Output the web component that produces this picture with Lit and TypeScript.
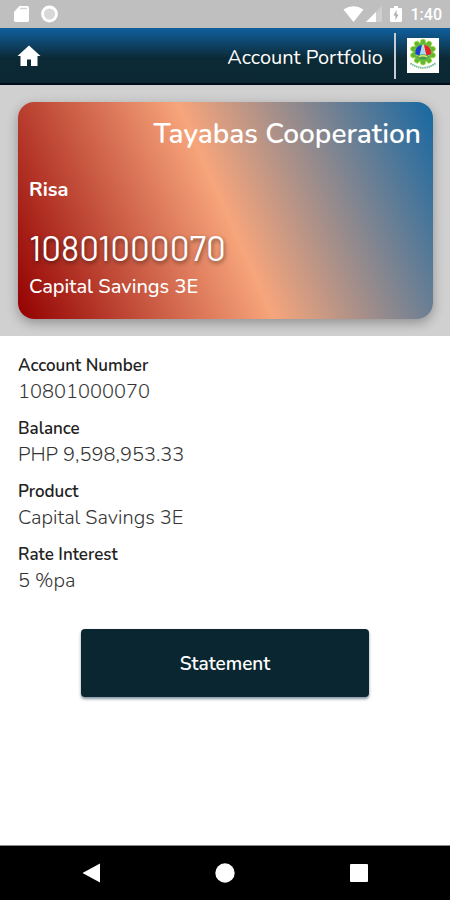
import { LitElement, html, css, svg } from "lit";
import { customElement, property } from "lit/decorators.js";

const petals = Array.from({ length: 10 }, (_, i) => i * 36);

@customElement("status-bar")
class StatusBar extends LitElement {
  static styles = css`
    :host {
      display: flex;
      align-items: center;
      height: 28px;
      padding: 0 8px 0 14px;
      background: #bfbfbf;
      color: #fff;
      font: 500 16px/28px Roboto, sans-serif;
    }
    svg { display: block; fill: #fff; }
    .left, .right { display: flex; align-items: center; }
    .left { gap: 12px; }
    .right { margin-left: auto; }
    .battery { margin: 0 9px 0 8px; }
    .time { padding-top: 2px; }
  `;
  render() {
    return html`
      <div class="left">
        <svg width="15" height="18" viewBox="0 0 15 18">
          <path d="M5.500 1H13Q15 1 15 3V15.500Q15 17 13 17H2Q0 17 0 15.500V7Z" />
          <path d="M6 3.500H13" fill="none" stroke="#d4d4d4" stroke-width="1.500" />
        </svg>
        <svg width="17" height="18" viewBox="0 0 17 18">
          <circle cx="8.500" cy="9" r="7" fill="#d8d8d8" stroke="#fff" stroke-width="2.800" />
        </svg>
      </div>
      <div class="right">
        <svg width="21" height="18" viewBox="0 0 21 18">
          <path d="M10.500 17L.500 4.500Q10.500-2 20.500 4.500Z" />
        </svg>
        <svg width="18" height="18" viewBox="0 0 18 18">
          <path d="M18 1V17H2Z" opacity=".25" />
          <path d="M12 7V17H2Z" />
        </svg>
        <svg class="battery" width="12" height="18" viewBox="0 0 12 18">
          <path d="M4 1H8V3H11Q12 3 12 4V16Q12 17 11 17H1Q0 17 0 16V4Q0 3 1 3H4Z" />
          <path d="M6.500 5L3.500 10.500H5.500V15L8.500 9.500H6.500Z" fill="#aaa" />
        </svg>
        <span class="time">1:40</span>
      </div>
    `;
  }
}

@customElement("app-header")
class AppHeader extends LitElement {
  @property() heading = "";
  static styles = css`
    :host {
      display: flex;
      align-items: center;
      box-sizing: border-box;
      height: 57px;
      padding: 0 11px 0 17px;
      border-bottom: 2px solid #020c1c;
      background: linear-gradient(#10609f, #0c2a36 55%, #0a2732);
      color: #fff;
    }
    .home { padding: 0; border: 0; background: none; cursor: pointer; }
    svg { display: block; }
    h1 {
      margin: 0 0 0 auto;
      padding: 4px 11px 0 0;
      font: 400 20px/42px Nunito, "Noto Sans", sans-serif;
      border-right: 2px solid #c3cdd6;
    }
    .logo { margin-left: 11px; background: #fff; }
  `;
  render() {
    return html`
      <button class="home" aria-label="Home">
        <svg width="24" height="22" viewBox="0 0 24 22" fill="#fff">
          <path d="M12 .500L23.500 11H20.500V21H14V14.500H10V21H3.500V11H.500Z" />
        </svg>
      </button>
      <h1>${this.heading}</h1>
      <svg class="logo" width="32" height="35" viewBox="0 0 33 35" role="img" aria-label="Tayabas Cooperation logo">
        ${petals.map((a) => svg`<ellipse cx="16.500" cy="3.800" rx="2.800" ry="3.200" fill="#5cb82e" stroke="#b5e04c" stroke-width=".8" transform="rotate(${a} 16.500 14)" />`)}
        <circle cx="16.500" cy="14" r="10" fill="#66bd3c" />
        <circle cx="16.500" cy="14" r="7.500" fill="#c5e8b2" />
        <path d="M15.500 6.500Q8 8 8.500 16L13 18Z" fill="#173fd0" />
        <path d="M17.500 6.500Q25 8 25 16L20 18Z" fill="#e8202c" />
        <path d="M16.500 8L20 17H13Z" fill="#a9d8f4" />
        <path d="M10 18Q16.500 14.500 23 18Q20.500 22 16.500 22Q12.500 22 10 18Z" fill="#469b51" />
        <path d="M12 19Q16 16.500 21 19" fill="none" stroke="#dbe966" stroke-width="1.500" />
        <path d="M3.500 25.500Q16.500 35 29.500 25.500" fill="none" stroke="#6fb894" stroke-width="2" stroke-dasharray="1.500 .700" />
      </svg>
    `;
  }
}

@customElement("account-card")
class AccountCard extends LitElement {
  @property() bank = "";
  @property() holder = "";
  @property() number = "";
  @property() product = "";
  static styles = css`
    :host {
      display: block;
      padding: 17px 17px 17px 18px;
      background: #d0d0d0;
    }
    .card {
      display: flex;
      flex-direction: column;
      box-sizing: border-box;
      min-height: 217px;
      padding: 12px 12px 16px 11px;
      border-radius: 16px;
      background: linear-gradient(66deg, #930000, #f7a57b 50%, #1668a3);
      box-shadow: 0 4px 12px rgba(0, 0, 0, 0.3);
      color: #fff;
      font-family: Nunito, "Noto Sans", sans-serif;
    }
    .bank { margin: 0; text-align: right; font-size: 28px; line-height: 40px; font-weight: 600; }
    .holder { margin-top: 23px; font-size: 20px; line-height: 26px; font-weight: 700; }
    .number {
      margin-top: 24px;
      font: 400 35px/40px Barlow, Roboto, sans-serif;
      text-shadow: 1px 2px 4px rgba(0, 0, 0, 0.5);
    }
    .product { margin-top: 6px; font-size: 20px; line-height: 28px; font-weight: 500; }
  `;
  render() {
    return html`
      <section class="card">
        <h2 class="bank">${this.bank}</h2>
        <div class="holder">${this.holder}</div>
        <div class="number">${this.number}</div>
        <div class="product">${this.product}</div>
      </section>
    `;
  }
}

@customElement("nav-bar")
class NavBar extends LitElement {
  static styles = css`
    :host {
      display: grid;
      grid-template-columns: repeat(3, 134px);
      justify-content: center;
      height: 54px;
      background: #000;
      border-top: 1px solid #888;
    }
    button { display: grid; place-items: center; padding: 0; border: 0; background: none; cursor: pointer; }
    svg { display: block; fill: #fff; }
  `;
  render() {
    return html`
      <button aria-label="Back"><svg width="20" height="20" viewBox="0 0 20 20"><path d="M19 .500V19.500L1.500 10Z" /></svg></button>
      <button aria-label="Home"><svg width="20" height="20" viewBox="0 0 20 20"><circle cx="10" cy="10" r="9.700" /></svg></button>
      <button aria-label="Recent apps"><svg width="20" height="20" viewBox="0 0 20 20"><rect x="1" y="1" width="18" height="18" rx="1" /></svg></button>
    `;
  }
}

@customElement("app-root")
class AppRoot extends LitElement {
  static styles = css`
    :host {
      display: flex;
      flex-direction: column;
      min-height: 100vh;
      background: #fff;
      font-family: Nunito, "Noto Sans", sans-serif;
    }
    dl { margin: 0; padding: 17px 18px 0; }
    .row { margin-bottom: 11px; }
    dt { font-size: 17px; line-height: 25px; font-weight: 600; color: #222; }
    dd { margin: 0; font-size: 20px; line-height: 27px; font-weight: 300; color: #333; }
    .statement {
      align-self: center;
      width: 64%;
      margin: 24px 0;
      padding: 21px 20px 19px;
      border: 0;
      border-radius: 4px;
      background: #0a2731;
      box-shadow: 0 2px 3px rgba(10, 39, 70, 0.5);
      color: #fff;
      font: 600 19px/28px Nunito, "Noto Sans", sans-serif;
      cursor: pointer;
    }
    nav-bar { margin-top: auto; }
  `;
  private rows = [
    ["Account Number", "10801000070"],
    ["Balance", "PHP 9,598,953.33"],
    ["Product", "Capital Savings 3E"],
    ["Rate Interest", "5 %pa"],
  ];
  render() {
    return html`
      <status-bar></status-bar>
      <app-header heading="Account Portfolio"></app-header>
      <account-card bank="Tayabas Cooperation" holder="Risa" number="10801000070" product="Capital Savings 3E"></account-card>
      <dl>
        ${this.rows.map(([label, value]) => html`<div class="row"><dt>${label}</dt><dd>${value}</dd></div>`)}
      </dl>
      <button class="statement">Statement</button>
      <nav-bar></nav-bar>
    `;
  }
}
